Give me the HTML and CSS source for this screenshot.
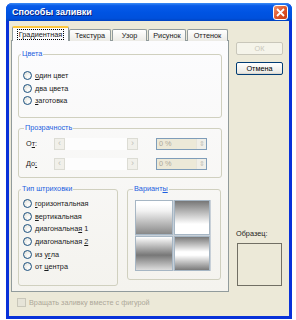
FILE: index.html
```html
<!DOCTYPE html>
<html lang="ru">
<head>
    <meta charset="UTF-8">
    <title>Способы заливки</title>
    <link rel="stylesheet" href="styles.css">
</head>
<body>
    <div class="window">
        <div class="titlebar">
            <span class="title">Способы заливки</span>
            <span class="close">
                <svg width="9" height="9" viewBox="0 0 9 9"><path d="M1 1 L8 8 M8 1 L1 8" stroke="#fff" stroke-width="1.8"/></svg>
            </span>
        </div>
        <div class="client">
            <div class="main">
                <div class="left">
                    <div class="tabs">
                        <div class="tab active"><span class="focus">Градиентная</span></div>
                        <div class="tab t2">Текстура</div>
                        <div class="tab t3">Узор</div>
                        <div class="tab t4">Рисунок</div>
                        <div class="tab t5">Оттенок</div>
                    </div>
                    <div class="panel">
                        <fieldset class="group colors">
                            <legend>Цвета</legend>
                            <div class="radio"><span class="dot"></span><span><u>о</u>дин цвет</span></div>
                            <div class="radio"><span class="dot"></span><span><u>д</u>ва цвета</span></div>
                            <div class="radio"><span class="dot"></span><span><u>з</u>аготовка</span></div>
                        </fieldset>
                        <fieldset class="group transp">
                            <legend>Прозрачность</legend>
                            <div class="trow">
                                <span class="tlabel">О<u>т</u>:</span>
                                <span class="scroll"><span class="arr">‹</span><span class="track"></span><span class="arr">›</span></span>
                                <span class="spin"><span class="val">0 %</span><span class="spinbtn">⇕</span></span>
                            </div>
                            <div class="trow">
                                <span class="tlabel">До<u>:</u></span>
                                <span class="scroll"><span class="arr">‹</span><span class="track"></span><span class="arr">›</span></span>
                                <span class="spin"><span class="val">0 %</span><span class="spinbtn">⇕</span></span>
                            </div>
                        </fieldset>
                        <div class="lower">
                            <fieldset class="group shading">
                                <legend>Тип штриховки</legend>
                                <div class="radio"><span class="dot"></span><span><u>г</u>оризонтальная</span></div>
                                <div class="radio"><span class="dot"></span><span><u>в</u>ертикальная</span></div>
                                <div class="radio"><span class="dot"></span><span>диагональна<u>я</u> 1</span></div>
                                <div class="radio"><span class="dot"></span><span>диагональная <u>2</u></span></div>
                                <div class="radio"><span class="dot"></span><span>из у<u>г</u>ла</span></div>
                                <div class="radio"><span class="dot"></span><span>от <u>ц</u>ентра</span></div>
                            </fieldset>
                            <fieldset class="group variants">
                                <legend>Вариант<u>ы</u></legend>
                                <div class="swatches">
                                    <span class="sw sw1"></span>
                                    <span class="sw sw2"></span>
                                    <span class="sw sw3"></span>
                                    <span class="sw sw4"></span>
                                </div>
                            </fieldset>
                        </div>
                    </div>
                </div>
                <div class="side">
                    <button class="btn" disabled>ОК</button>
                    <button class="btn cancel">Отмена</button>
                    <div class="sample-label">Образец:</div>
                    <div class="sample"></div>
                </div>
            </div>
            <div class="rotate"><span class="check"></span><span>Вращать заливку вместе с фигурой</span></div>
        </div>
    </div>
</body>
</html>
```

FILE: styles.css
```css
body {
    margin: 0;
    background: #fff;
    font-family: "Liberation Sans", Arial, sans-serif;
    font-size: 7.3px;
    color: #1a1a1a;
}
.window {
    margin: 3px 0 0 6px;
    width: 286px;
    height: 316px;
    box-sizing: border-box;
    background: #0831d9;
    border-radius: 6px 6px 0 0;
    padding: 0 3px 3px 3px;
    display: flex;
    flex-direction: column;
}
.titlebar {
    height: 18px;
    margin: 0 -3px;
    padding: 0 4px 0 6px;
    border-radius: 6px 6px 0 0;
    background: linear-gradient(#3d8df5 0%, #0a5ce9 15%, #0054e3 50%, #0050dc 85%, #0042c0 100%);
    display: flex;
    align-items: center;
    justify-content: space-between;
}
.title {
    color: #fff;
    font-weight: bold;
    font-size: 9px;
    text-shadow: 1px 1px 0 #0a1f7a;
}
.close {
    width: 13px;
    height: 13px;
    border: 1px solid #fff;
    border-radius: 3px;
    background: linear-gradient(135deg, #f0916c, #e0582c 50%, #c83c10);
    display: flex;
    align-items: center;
    justify-content: center;
}
.client {
    flex: 1;
    background: #ece9d8;
    padding: 5px 0 0 2px;
    display: flex;
    flex-direction: column;
}
.main {
    display: flex;
}
.left {
    width: 218px;
}
.tabs {
    display: flex;
    height: 15px;
    align-items: flex-end;
    position: relative;
    z-index: 1;
    margin-bottom: -1px;
}
.tab {
    height: 12px;
    box-sizing: border-box;
    border: 1px solid #919b9c;
    border-bottom: none;
    border-radius: 2px 2px 0 0;
    background: linear-gradient(#fff, #ecebe6);
    display: flex;
    align-items: center;
    justify-content: center;
}
.tab.active {
    width: 57px;
    height: 15px;
    margin-left: 1px;
    background: #fcfcfe;
    border-top: 2px solid #ffc83c;
}
.focus {
    border: 1px dotted #000;
    padding: 0 1px;
    line-height: 9px;
}
.t2 { width: 42px; }
.t3 { width: 35px; margin-left: 1px; }
.t4 { width: 38px; margin-left: 1px; }
.t5 { width: 41px; margin-left: 1px; }
.panel {
    height: 252px;
    box-sizing: border-box;
    border: 1px solid #919b9c;
    background: linear-gradient(#fcfcfe, #f4f3ee);
    padding: 8px 6px 0 6px;
}
.group {
    margin: 0;
    padding: 0 0 0 4px;
    border: 1px solid #d0d0bf;
    border-radius: 3px;
    box-sizing: border-box;
    min-width: 0;
}
.group legend {
    color: #1c5ee0;
    padding: 0 1px;
    margin-left: -2px;
    line-height: 10px;
}
.colors {
    height: 69px;
    padding-top: 10px;
}
.radio {
    height: 12.7px;
    display: flex;
    align-items: center;
    white-space: nowrap;
}
.dot {
    width: 7px;
    height: 7px;
    border: 1px solid #1c5180;
    border-radius: 50%;
    background: radial-gradient(circle at 65% 65%, #fff, #dcdcd4);
    margin-right: 3px;
    flex: none;
}
.transp {
    margin-top: 5px;
    height: 55px;
    padding: 4px 0 0 7px;
}
.trow {
    height: 13px;
    display: flex;
    align-items: center;
    margin-bottom: 7px;
}
.tlabel {
    width: 28px;
}
.scroll {
    width: 84px;
    height: 12px;
    display: flex;
    background: #fdfdfd;
}
.arr {
    width: 11px;
    box-sizing: border-box;
    border: 1px solid #dcdcd4;
    background: #f1f0ea;
    color: #c0c0b8;
    font-size: 9px;
    line-height: 9px;
    text-align: center;
}
.track {
    flex: 1;
}
.spin {
    margin-left: 18px;
    width: 51px;
    height: 12px;
    box-sizing: border-box;
    border: 1px solid #7f9db9;
    background: #ece9d8;
    display: flex;
    justify-content: space-between;
}
.val {
    color: #aca899;
    padding-left: 2px;
    line-height: 10px;
}
.spinbtn {
    width: 9px;
    border-left: 1px solid #e6e4da;
    background: #f0efe8;
    color: #c0bfb4;
    font-size: 7px;
    line-height: 10px;
    text-align: center;
}
.lower {
    display: flex;
    align-items: flex-start;
    margin-top: 6px;
}
.shading {
    width: 100px;
    height: 102px;
    padding-top: 3px;
}
.variants {
    width: 94px;
    height: 96px;
    margin-left: 9px;
    padding: 6px 0 0 7px;
}
.swatches {
    width: 76px;
    height: 71px;
    display: grid;
    grid-template-columns: 38px 36px;
    grid-template-rows: 35px 35px;
    gap: 1px;
    background: #c8d0d8;
}
.sw {
    border: 1px solid #a6b6c4;
}
.sw1 { background: linear-gradient(#fff 10%, #f2f2f2 30%, #888 100%); }
.sw2 { background: linear-gradient(#777 0%, #bbb 35%, #fff 70%, #fff 100%); }
.sw3 { background: linear-gradient(#fff 0%, #777 55%, #ddd 100%); }
.sw4 { background: linear-gradient(#7a7a7a 0%, #fff 45%, #fff 55%, #7a7a7a 100%); }
.side {
    margin-left: 7px;
    padding-top: 16px;
    display: flex;
    flex-direction: column;
}
.btn {
    width: 47px;
    height: 13px;
    box-sizing: border-box;
    padding: 0;
    border: 1px solid #003c74;
    border-radius: 2px;
    background: linear-gradient(#fff, #ecebe6 85%, #d6d0c5);
    font-family: "Liberation Sans", Arial, sans-serif;
    font-size: 7.3px;
    color: #000;
}
.btn[disabled] {
    border-color: #c9c7ba;
    background: #f5f4ea;
    color: #c9c7ba;
}
.cancel {
    margin-top: 7px;
}
.sample-label {
    margin-top: 154px;
    line-height: 10px;
}
.sample {
    margin-top: 4px;
    margin-left: 1px;
    width: 45px;
    height: 43px;
    box-sizing: border-box;
    border: 1px solid #716f64;
}
.rotate {
    margin-top: 6px;
    margin-left: 6px;
    display: flex;
    align-items: center;
    color: #aca899;
}
.check {
    width: 7px;
    height: 7px;
    border: 1px solid #c9c7ba;
    background: #e6e4d8;
    margin-right: 3px;
}
```
